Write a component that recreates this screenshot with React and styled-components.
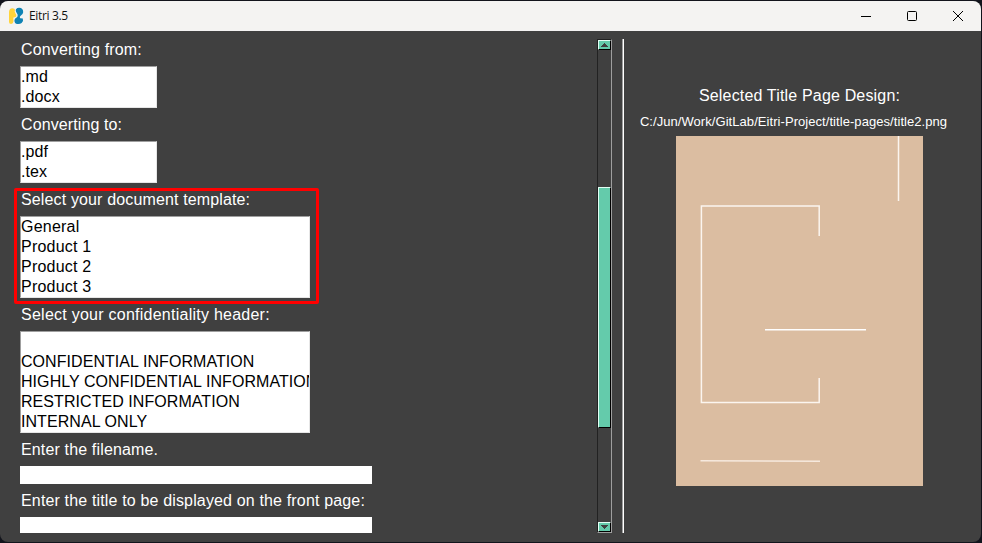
import React from "react";
import styled, { createGlobalStyle } from "styled-components";

const GlobalStyle = createGlobalStyle`
  * { box-sizing: border-box; }
  body { margin: 0; background: #12141c; overflow: hidden; }
`;

const Desktop = styled.div`
  width: 982px;
  height: 543px;
  padding: 1px 1px 1px 0;
  background: #12141c;
`;

const Window = styled.main`
  position: relative;
  display: flex;
  flex-direction: column;
  height: 100%;
  overflow: hidden;
  border-radius: 8px;
  background: #404040;
  font-family: "Liberation Sans", Arial, sans-serif;
  color: #fff;
`;

const TitleBar = styled.header`
  display: flex;
  align-items: center;
  flex: none;
  height: 30px;
  padding-left: 8px;
  background: #f4f3f2;
  color: #111;
`;

const AppTitle = styled.h1`
  flex: 1;
  margin: 0 0 0 5px;
  font: 400 12px/30px "Open Sans", "Noto Sans", sans-serif;
  letter-spacing: -0.35px;
`;

const WindowButton = styled.button`
  display: flex;
  align-items: center;
  justify-content: center;
  width: 46px;
  height: 30px;
  padding: 0;
  border: 0;
  background: none;
`;

const Body = styled.div`
  display: flex;
  flex: 1;
  min-height: 0;
  padding-bottom: 9px;
`;

const Form = styled.section`
  width: 597px;
  padding: 2px 0 0 20px;
  overflow: hidden;
`;

const Label = styled.label`
  display: block;
  height: 33px;
  padding-left: 1px;
  font-size: 16px;
  line-height: 33px;
  letter-spacing: ${(p) => p.$spacing || 0}px;
  white-space: nowrap;
`;

const ListBox = styled.ul`
  width: ${(p) => p.$width}px;
  margin: 0;
  padding: 0;
  overflow: hidden;
  list-style: none;
  border: 1px solid;
  border-color: #9f9f9f #e6e6e6 #e6e6e6 #9f9f9f;
  background: #fff;
  color: #000;
  letter-spacing: ${(p) => p.$spacing || 0}px;
`;

const Option = styled.li`
  height: 20px;
  font-size: 16px;
  line-height: 20px;
  white-space: nowrap;
`;

const TextInput = styled.input`
  display: block;
  width: 352px;
  height: 18px;
  padding: 0 2px;
  border: 0;
  border-radius: 0;
  background: #fff;
`;

const Highlight = styled.div`
  position: absolute;
  left: 14px;
  top: 187px;
  width: 305px;
  height: 116px;
  border: 3px solid #f00;
  border-radius: 2px;
`;

const ScrollBar = styled.div`
  display: flex;
  flex-direction: column;
  width: 15px;
  margin-top: 8px;
  border: 1px solid;
  border-color: #222 #9f9f9f #9f9f9f #222;
`;

const ScrollArrow = styled.button`
  display: flex;
  align-items: center;
  justify-content: center;
  height: 10px;
  padding: 0;
  border: 1px solid;
  border-color: #e4fff5 #000 #000 #e4fff5;
  background: #64cbab;
`;

const ScrollTrack = styled.div`
  flex: 1;
  padding-top: 137px;
`;

const ScrollThumb = styled.div`
  height: 241px;
  border: 1px solid;
  border-color: #e4fff5 #000 #000 #e4fff5;
  background: #64cbab;
`;

const Divider = styled.div`
  width: 2px;
  margin: 8px 0 0 10px;
  border-left: 1px solid #9f9f9f;
  background: #fff;
`;

const Preview = styled.section`
  display: flex;
  flex-direction: column;
  align-items: center;
  width: 351px;
  padding-top: 50px;
`;

const PreviewTitle = styled.h2`
  margin: 0;
  font-size: 16px;
  font-weight: 400;
  line-height: 30px;
  letter-spacing: 0.17px;
`;

const PreviewPath = styled.p`
  margin: 0 12px 4px 0;
  font-size: 13px;
  line-height: 21px;
  letter-spacing: 0.06px;
  white-space: nowrap;
`;

const Cover = styled.svg`
  display: block;
  background: #dbbda1;
`;

const Logo = () => (
  <svg width="16" height="18" viewBox="0 0 16 18">
    <path d="M1 15V5Q1 1.2 4.6 1.2Q6.6 1.2 7 2.8Q6.2 4.4 7.4 6.2Q9 8 8.2 9.4Q7.4 10.4 5.4 10.6V14.6Q5.2 17 3.1 17Q1 17 1 15Z" fill="#ffd43b" />
    <path d="M8 2.2Q9 .8 11.2 .8Q15.2 1 15.2 5.2Q15.1 7.3 12.4 9.1Q11.2 10.2 12.2 11.2L14.8 11.6Q15.8 14 13.6 15.9Q12 17.3 9.4 17Q6.4 16.4 6.4 13.4Q6.4 11.5 8.6 10.6Q10.2 9.4 9.6 7.4L8.2 5Q7.4 3.6 8 2.2Z" fill="#0f82b4" />
  </svg>
);

const fields = [
  { label: "Converting from:", spacing: 0.17, width: 137, listSpacing: 0.1, options: [".md", ".docx"] },
  { label: "Converting to:", spacing: 0.1, width: 137, listSpacing: 0.1, options: [".pdf", ".tex"] },
  {
    label: "Select your document template:",
    spacing: 0.14,
    width: 290,
    listSpacing: 0.22,
    options: ["General", "Product 1", "Product 2", "Product 3"],
  },
  {
    label: "Select your confidentiality header:",
    spacing: 0.25,
    width: 290,
    listSpacing: 0.06,
    options: ["", "CONFIDENTIAL INFORMATION", "HIGHLY CONFIDENTIAL INFORMATION", "RESTRICTED INFORMATION", "INTERNAL ONLY"],
  },
];

export default function App() {
  return (
    <Desktop>
      <GlobalStyle />
      <Window>
        <TitleBar>
          <Logo />
          <AppTitle>Eitri 3.5</AppTitle>
          <WindowButton aria-label="Minimize">
            <svg width="10" height="10"><path d="M0 5.5H10" stroke="#000" /></svg>
          </WindowButton>
          <WindowButton aria-label="Maximize">
            <svg width="10" height="10"><rect x=".5" y=".5" width="9" height="9" rx="1" fill="none" stroke="#000" /></svg>
          </WindowButton>
          <WindowButton aria-label="Close">
            <svg width="10" height="10"><path d="M0 0L10 10M10 0L0 10" stroke="#000" /></svg>
          </WindowButton>
        </TitleBar>
        <Body>
          <Form>
            {fields.map((f) => (
              <React.Fragment key={f.label}>
                <Label $spacing={f.spacing}>{f.label}</Label>
                <ListBox $width={f.width} $spacing={f.listSpacing}>
                  {f.options.map((o) => <Option key={o}>{o}</Option>)}
                </ListBox>
              </React.Fragment>
            ))}
            <Label htmlFor="filename" $spacing={0.15}>Enter the filename.</Label>
            <TextInput id="filename" />
            <Label htmlFor="title" $spacing={0.155}>Enter the title to be displayed on the front page:</Label>
            <TextInput id="title" />
          </Form>
          <ScrollBar>
            <ScrollArrow aria-label="Scroll up">
              <svg width="7" height="4" shapeRendering="crispEdges"><path d="M3 0H4V1H5V2H6V3H7V4H0V3H1V2H2V1H3Z" fill="#404040" /></svg>
            </ScrollArrow>
            <ScrollTrack><ScrollThumb /></ScrollTrack>
            <ScrollArrow aria-label="Scroll down">
              <svg width="7" height="4" shapeRendering="crispEdges"><path d="M0 0H7V1H6V2H5V3H4V4H3V3H2V2H1V1H0Z" fill="#404040" /></svg>
            </ScrollArrow>
          </ScrollBar>
          <Divider />
          <Preview>
            <PreviewTitle>Selected Title Page Design:</PreviewTitle>
            <PreviewPath>C:/Jun/Work/GitLab/Eitri-Project/title-pages/title2.png</PreviewPath>
            <Cover width="247" height="350" fill="none" stroke="#fbf5ef" strokeWidth="1.5">
              <path d="M222.5 0V65" />
              <path d="M143.2 100V69.9H25.4V266.4H143.2V242" />
              <path d="M89 193.8H190" stroke="#fff" />
              <path d="M24.5 324.8L144 325.3" stroke="#f6e9de" />
            </Cover>
          </Preview>
        </Body>
        <Highlight />
      </Window>
    </Desktop>
  );
}
